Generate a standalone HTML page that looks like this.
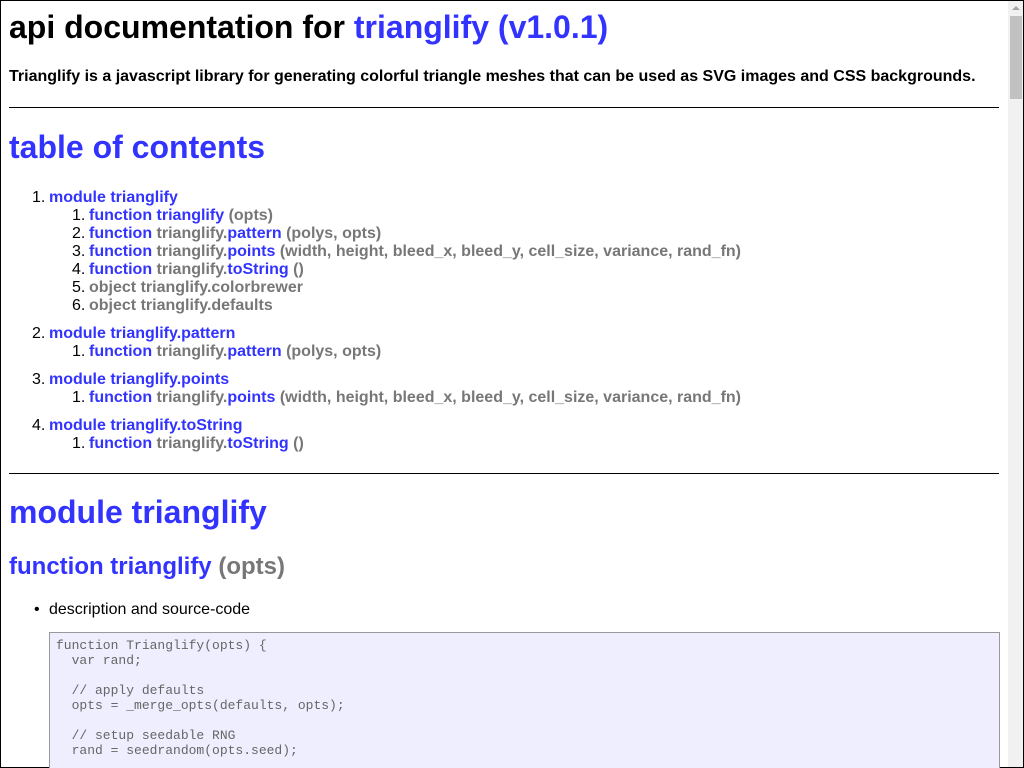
<!DOCTYPE html>
<html><head><meta charset="utf-8"><style>
html,body{margin:0;padding:0;width:1024px;height:768px;overflow:hidden;background:#fff}
body{font-family:"Liberation Sans",sans-serif;color:#000;position:relative}
.frame{position:absolute;left:0;top:0;width:1022px;height:766px;border:1px solid #000}
.sb{position:absolute;left:1008px;top:1px;width:15px;height:766px;background:#f1f1f1}
.thumb{position:absolute;left:1010px;top:16px;width:12px;height:83px;background:#c1c1c1}
.arr{position:absolute;left:1012px;top:6px;width:0;height:0;border-left:4px solid transparent;border-right:4px solid transparent;border-bottom:4px solid #a3a3a3}
.a{position:absolute;white-space:nowrap}
.b{color:#3333ff}.g{color:#777}
.h1{font-size:32px;font-weight:bold;line-height:38px}
.h2{font-size:24px;font-weight:bold;line-height:28px}
.t{font-size:16px;font-weight:bold;line-height:18px}
.n{font-weight:normal;color:#000;display:inline-block;width:17px}
hr{position:absolute;left:9px;width:990px;margin:0;border:0;border-top:1px solid #000;height:0}
.code{position:absolute;left:49px;top:632px;width:949px;height:140px;background:#eeeeff;border:1px solid #999}
pre{margin:0;position:absolute;left:56px;top:638px;font-family:"Liberation Mono",monospace;font-size:13px;line-height:15px;color:#666}
</style></head><body>
<div class="frame"></div>
<div class="a h1" style="left:9px;top:8px">api documentation for <span class="b">trianglify (v1.0.1)</span></div>
<div class="a t" style="left:9px;top:68px">Trianglify is a javascript library for generating colorful triangle meshes that can be used as SVG images and CSS backgrounds.</div>
<hr style="top:107px">
<div class="a h1 b" style="left:9px;top:128px">table of contents</div>

<div class="a t" style="left:32px;top:189px"><span class="n">1.</span><span class="b">module trianglify</span></div>
<div class="a t" style="left:72px;top:207px"><span class="n">1.</span><span class="b">function trianglify</span> <span class="g">(opts)</span></div>
<div class="a t" style="left:72px;top:225px"><span class="n">2.</span><span class="b">function</span> <span class="g">trianglify.</span><span class="b">pattern</span> <span class="g">(polys, opts)</span></div>
<div class="a t" style="left:72px;top:243px"><span class="n">3.</span><span class="b">function</span> <span class="g">trianglify.</span><span class="b">points</span> <span class="g">(width, height, bleed_x, bleed_y, cell_size, variance, rand_fn)</span></div>
<div class="a t" style="left:72px;top:261px"><span class="n">4.</span><span class="b">function</span> <span class="g">trianglify.</span><span class="b">toString</span> <span class="g">()</span></div>
<div class="a t" style="left:72px;top:279px"><span class="n">5.</span><span class="g">object trianglify.colorbrewer</span></div>
<div class="a t" style="left:72px;top:297px"><span class="n">6.</span><span class="g">object trianglify.defaults</span></div>

<div class="a t" style="left:32px;top:325px"><span class="n">2.</span><span class="b">module trianglify.pattern</span></div>
<div class="a t" style="left:72px;top:343px"><span class="n">1.</span><span class="b">function</span> <span class="g">trianglify.</span><span class="b">pattern</span> <span class="g">(polys, opts)</span></div>

<div class="a t" style="left:32px;top:371px"><span class="n">3.</span><span class="b">module trianglify.points</span></div>
<div class="a t" style="left:72px;top:389px"><span class="n">1.</span><span class="b">function</span> <span class="g">trianglify.</span><span class="b">points</span> <span class="g">(width, height, bleed_x, bleed_y, cell_size, variance, rand_fn)</span></div>

<div class="a t" style="left:32px;top:417px"><span class="n">4.</span><span class="b">module trianglify.toString</span></div>
<div class="a t" style="left:72px;top:435px"><span class="n">1.</span><span class="b">function</span> <span class="g">trianglify.</span><span class="b">toString</span> <span class="g">()</span></div>

<hr style="top:473px">
<div class="a h1 b" style="left:9px;top:493px">module trianglify</div>
<div class="a h2" style="left:9px;top:553px"><span class="b">function trianglify</span> <span class="g">(opts)</span></div>
<div class="a" style="left:34px;top:601px;font-size:16px;line-height:18px">•</div>
<div class="a" style="left:49px;top:601px;font-size:16px;line-height:18px">description and source-code</div>
<div class="code"></div>
<pre>function Trianglify(opts) {
  var rand;

  // apply defaults
  opts = _merge_opts(defaults, opts);

  // setup seedable RNG
  rand = seedrandom(opts.seed);</pre>
<div class="sb"></div><div class="thumb"></div><div class="arr"></div>
</body></html>
